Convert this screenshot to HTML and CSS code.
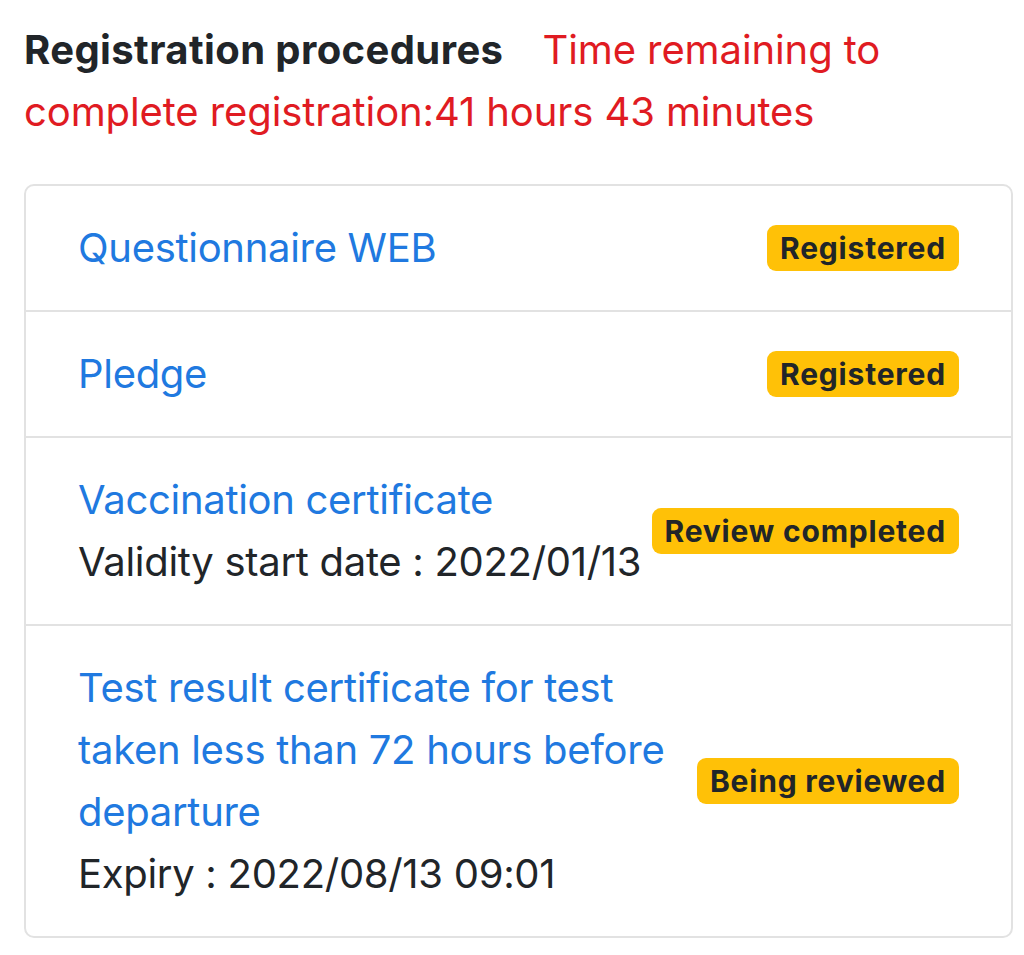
FILE: index.html
```html
<!DOCTYPE html>
<html lang="en">
<head>
<meta charset="utf-8">
<title>Registration procedures</title>
<link rel="stylesheet" href="styles.css">
</head>
<body>
<main class="page">
  <h2 class="heading"><span class="title">Registration procedures</span> <span class="remaining">Time remaining to complete registration:41 hours 43 minutes</span></h2>
  <ul class="list">
    <li class="item">
      <div class="item-text"><a class="item-link" href="#">Questionnaire WEB</a></div>
      <span class="badge">Registered</span>
    </li>
    <li class="item">
      <div class="item-text"><a class="item-link" href="#">Pledge</a></div>
      <span class="badge">Registered</span>
    </li>
    <li class="item">
      <div class="item-text"><a class="item-link" href="#">Vaccination certificate</a><div class="item-note">Validity start date : 2022/01/13</div></div>
      <span class="badge">Review completed</span>
    </li>
    <li class="item">
      <div class="item-text"><a class="item-link" href="#">Test result certificate for test taken less than 72 hours before departure</a><div class="item-note">Expiry : 2022/08/13 09:01</div></div>
      <span class="badge">Being reviewed</span>
    </li>
  </ul>
</main>
</body>
</html>
```
FILE: styles.css
```css
* { box-sizing: border-box; }
html, body { margin: 0; padding: 0; background: #ffffff; }
body {
  font-family: Inter, "Liberation Sans", Arial, sans-serif;
  font-size: 40px;
  line-height: 62px;
  color: #212529;
  letter-spacing: -0.2px;
}
.page { padding: 19px 11px 0 24px; }
.heading { margin: 0 0 41px 0; font-size: 40px; font-weight: 400; line-height: 62px; }
.title { font-weight: 700; color: #212529; margin-right: 28px; letter-spacing: 0.4px; }
.remaining { color: #e01b22; letter-spacing: -0.1px; }
.list {
  list-style: none;
  margin: 0;
  padding: 0;
  border: 2px solid #e2e2e2;
  border-radius: 10px;
}
.item {
  display: flex;
  align-items: center;
  justify-content: space-between;
  padding: 31px 52px 31px 52px;
  border-top: 2px solid #e2e2e2;
}
.item:first-child { border-top: none; }
.item-text { flex: 1 1 auto; min-width: 0; }
.item-link { color: #2079e0; text-decoration: none; letter-spacing: -0.3px; }
.item-note { color: #212529; white-space: nowrap; letter-spacing: -0.3px; }
.badge {
  flex: 0 0 auto;
  background: #ffc107;
  color: #212529;
  font-weight: 700;
  font-size: 30px;
  line-height: 30px;
  padding: 8px 13px;
  border-radius: 9px;
  letter-spacing: 0.8px;
}
```
